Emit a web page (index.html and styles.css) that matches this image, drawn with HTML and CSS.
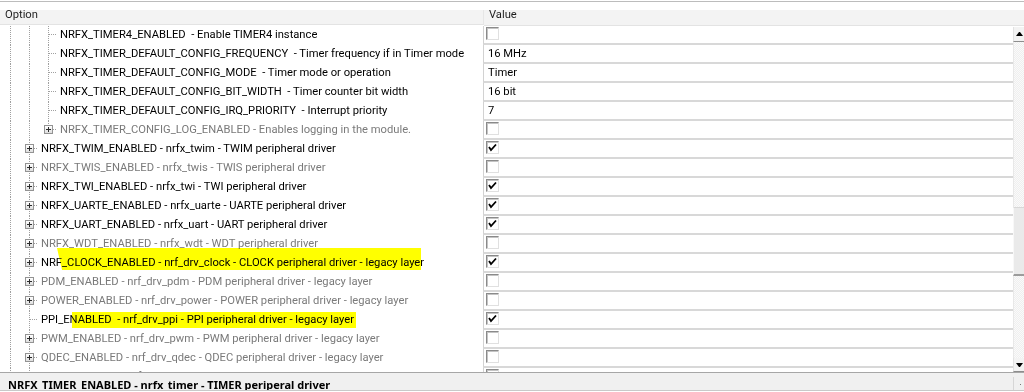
FILE: index.html
```html
<!DOCTYPE html>
<html lang="en">
<head>
    <meta charset="UTF-8">
    <meta name="viewport" content="width=device-width, initial-scale=1.0">
    <title>sdk_config.h - Configuration Wizard</title>
    <link rel="stylesheet" href="styles.css">
</head>
<body>

<div class="wizard">
    <div class="head">
        <div class="head-opt">Option</div>
        <div class="head-val">Value</div>
    </div>

    <div class="list">
        <div class="rows">
            <div class="row">
                <div class="opt"><span class="g v"></span><span class="g v"></span><span class="g tee"></span><span class="txt">NRFX_TIMER4_ENABLED  - Enable TIMER4 instance</span></div>
                <div class="val"><span class="chk"></span></div>
            </div>
            <div class="row">
                <div class="opt"><span class="g v"></span><span class="g v"></span><span class="g tee"></span><span class="txt">NRFX_TIMER_DEFAULT_CONFIG_FREQUENCY  - Timer frequency if in Timer mode</span></div>
                <div class="val"><span class="vtxt">16 MHz</span></div>
            </div>
            <div class="row">
                <div class="opt"><span class="g v"></span><span class="g v"></span><span class="g tee"></span><span class="txt">NRFX_TIMER_DEFAULT_CONFIG_MODE  - Timer mode or operation</span></div>
                <div class="val"><span class="vtxt">Timer</span></div>
            </div>
            <div class="row">
                <div class="opt"><span class="g v"></span><span class="g v"></span><span class="g tee"></span><span class="txt">NRFX_TIMER_DEFAULT_CONFIG_BIT_WIDTH  - Timer counter bit width</span></div>
                <div class="val"><span class="vtxt">16 bit</span></div>
            </div>
            <div class="row">
                <div class="opt"><span class="g v"></span><span class="g v"></span><span class="g tee"></span><span class="txt">NRFX_TIMER_DEFAULT_CONFIG_IRQ_PRIORITY  - Interrupt priority</span></div>
                <div class="val"><span class="vtxt">7</span></div>
            </div>
            <div class="row off">
                <div class="opt"><span class="g v"></span><span class="g v"></span><span class="g end"><span class="exp"></span></span><span class="txt">NRFX_TIMER_CONFIG_LOG_ENABLED - Enables logging in the module.</span></div>
                <div class="val"><span class="chk"></span></div>
            </div>
            <div class="row">
                <div class="opt"><span class="g v"></span><span class="g tee"><span class="exp"></span></span><span class="txt">NRFX_TWIM_ENABLED - nrfx_twim - TWIM peripheral driver</span></div>
                <div class="val"><span class="chk"><svg class="tick" viewBox="0 0 11 11"><path d="M2 5l2 3 5-5.5"/></svg></span></div>
            </div>
            <div class="row off">
                <div class="opt"><span class="g v"></span><span class="g tee"><span class="exp"></span></span><span class="txt">NRFX_TWIS_ENABLED - nrfx_twis - TWIS peripheral driver</span></div>
                <div class="val"><span class="chk"></span></div>
            </div>
            <div class="row">
                <div class="opt"><span class="g v"></span><span class="g tee"><span class="exp"></span></span><span class="txt">NRFX_TWI_ENABLED - nrfx_twi - TWI peripheral driver</span></div>
                <div class="val"><span class="chk"><svg class="tick" viewBox="0 0 11 11"><path d="M2 5l2 3 5-5.5"/></svg></span></div>
            </div>
            <div class="row">
                <div class="opt"><span class="g v"></span><span class="g tee"><span class="exp"></span></span><span class="txt">NRFX_UARTE_ENABLED - nrfx_uarte - UARTE peripheral driver</span></div>
                <div class="val"><span class="chk"><svg class="tick" viewBox="0 0 11 11"><path d="M2 5l2 3 5-5.5"/></svg></span></div>
            </div>
            <div class="row">
                <div class="opt"><span class="g v"></span><span class="g tee"><span class="exp"></span></span><span class="txt">NRFX_UART_ENABLED - nrfx_uart - UART peripheral driver</span></div>
                <div class="val"><span class="chk"><svg class="tick" viewBox="0 0 11 11"><path d="M2 5l2 3 5-5.5"/></svg></span></div>
            </div>
            <div class="row off">
                <div class="opt"><span class="g v"></span><span class="g tee"><span class="exp"></span></span><span class="txt">NRFX_WDT_ENABLED - nrfx_wdt - WDT peripheral driver</span></div>
                <div class="val"><span class="chk"></span></div>
            </div>
            <div class="row">
                <div class="opt"><span class="g v"></span><span class="g tee"><span class="exp"></span></span><span class="txt">NRF_CLOCK_ENABLED - nrf_drv_clock - CLOCK peripheral driver - legacy layer</span><span class="hl hl-clock"></span></div>
                <div class="val"><span class="chk"><svg class="tick" viewBox="0 0 11 11"><path d="M2 5l2 3 5-5.5"/></svg></span></div>
            </div>
            <div class="row off">
                <div class="opt"><span class="g v"></span><span class="g tee"><span class="exp"></span></span><span class="txt">PDM_ENABLED - nrf_drv_pdm - PDM peripheral driver - legacy layer</span></div>
                <div class="val"><span class="chk"></span></div>
            </div>
            <div class="row off">
                <div class="opt"><span class="g v"></span><span class="g tee"><span class="exp"></span></span><span class="txt">POWER_ENABLED - nrf_drv_power - POWER peripheral driver - legacy layer</span></div>
                <div class="val"><span class="chk"></span></div>
            </div>
            <div class="row">
                <div class="opt"><span class="g v"></span><span class="g tee"></span><span class="txt">PPI_ENABLED  - nrf_drv_ppi - PPI peripheral driver - legacy layer</span><span class="hl hl-ppi"></span></div>
                <div class="val"><span class="chk"><svg class="tick" viewBox="0 0 11 11"><path d="M2 5l2 3 5-5.5"/></svg></span></div>
            </div>
            <div class="row off">
                <div class="opt"><span class="g v"></span><span class="g tee"><span class="exp"></span></span><span class="txt">PWM_ENABLED - nrf_drv_pwm - PWM peripheral driver - legacy layer</span></div>
                <div class="val"><span class="chk"></span></div>
            </div>
            <div class="row off">
                <div class="opt"><span class="g v"></span><span class="g tee"><span class="exp"></span></span><span class="txt">QDEC_ENABLED - nrf_drv_qdec - QDEC peripheral driver - legacy layer</span></div>
                <div class="val"><span class="chk"></span></div>
            </div>
            <div class="row off">
                <div class="opt"><span class="g v"></span><span class="g tee"><span class="exp"></span></span><span class="txt">QSPI_ENABLED - nrf_drv_qspi - QSPI peripheral driver - legacy layer</span></div>
                <div class="val"><span class="chk"></span></div>
            </div>
        </div>

        <div class="scrollbar">
            <div class="sb-btn sb-up"></div>
            <div class="sb-track sb-upper"></div>
            <div class="sb-thumb"></div>
            <div class="sb-track sb-lower"></div>
            <div class="sb-btn sb-down"></div>
        </div>
    </div>

    <div class="status">
        <span class="status-text">NRFX_TIMER_ENABLED - nrfx_timer - TIMER periperal driver</span>
        <span class="grip"></span>
    </div>
</div>

</body>
</html>
```

FILE: styles.css
```css
/* Keil-style configuration wizard tree */
body {
    margin: 0;
    height: 392px;
    overflow: hidden;
    font-family: Roboto, "Noto Sans", sans-serif;
    font-size: 11.2px;
    color: #000;
    background-color: #fff;
}
.wizard {
    width: 1024px;
}

/* column header */
.head {
    display: flex;
    margin-top: 1px;
    border-top: 1px solid #bcbcbc;
    padding-top: 8px;
}
.head-opt,
.head-val {
    height: 15px;
    line-height: 10px;
    background-color: #f3f3f3;
    border-bottom: 1px solid #e3e3e3;
    color: #1e1e1e;
}
.head-opt {
    width: 484px;
    box-sizing: border-box;
    padding-left: 5px;
    border-right: 1px solid #e6e6e6;
}
.head-val {
    flex: 1;
    padding-left: 5px;
}

/* rows */
.list {
    display: flex;
    height: 346px;
}
.rows {
    width: 1013px;
    overflow: hidden;
}
.row {
    display: flex;
    height: 19px;
}
.opt {
    width: 483px;
    display: flex;
    position: relative;
}
.txt {
    white-space: pre;
    margin-left: 3px;
    line-height: 18px;
}
.off .txt {
    color: #7a7a7a;
}
.val {
    flex: 1;
    box-sizing: border-box;
    border-left: 1px solid #d2d2d2;
    border-bottom: 2px solid #d8d8d8;
    padding-left: 2px;
    line-height: 18px;
}
.vtxt {
    margin-left: 2px;
}

/* tree guide lines */
.wizard {
    --dotv: repeating-linear-gradient(to bottom, #a0a0a0 0 1px, transparent 1px 2px);
    --doth: repeating-linear-gradient(to right, #a0a0a0 0 1px, transparent 1px 2px);
}
.g {
    flex: none;
    width: 19px;
    height: 19px;
    display: flex;
    align-items: flex-start;
}
.g.v {
    background: var(--dotv) 10px 0 / 1px 100% no-repeat;
}
.g.tee {
    background: var(--dotv) 10px 0 / 1px 100% no-repeat,
                var(--doth) 11px 8px / 8px 1px no-repeat;
}
.g.end {
    background: var(--dotv) 10px 0 / 1px 9px no-repeat,
                var(--doth) 11px 8px / 8px 1px no-repeat;
}
.exp {
    width: 9px;
    height: 9px;
    box-sizing: border-box;
    margin: 4px 0 0 6px;
    border: 1px solid #939393;
    background: linear-gradient(#2b2b2b, #2b2b2b) center / 5px 1px no-repeat,
                linear-gradient(#2b2b2b, #2b2b2b) center / 1px 5px no-repeat,
                linear-gradient(#ffffff, #dedede);
}

/* check boxes */
.chk {
    display: block;
    width: 13px;
    height: 13px;
    box-sizing: border-box;
    margin-top: 1px;
    border: 1px solid;
    border-color: #8a8a8a #e0e0e0 #e0e0e0 #8a8a8a;
    box-shadow: inset 1px 1px 0 #c4c4c4;
    background-color: #fff;
}
.tick {
    display: block;
    width: 11px;
    height: 11px;
}
.tick path {
    fill: none;
    stroke: #000;
    stroke-width: 1.8;
}

/* marker pen highlights drawn over the screenshot */
.hl {
    position: absolute;
    background-color: #ffff00;
    mix-blend-mode: multiply;
}
.hl-clock {
    left: 57px;
    top: -6px;
    width: 364px;
    height: 22px;
    clip-path: polygon(0 0, 100% 0, 100% 100%, 5px 100%);
}
.hl-ppi {
    left: 72px;
    top: 1px;
    width: 284px;
    height: 16px;
}

/* vertical scrollbar (cut off at the right edge) */
.scrollbar {
    width: 11px;
    display: flex;
    flex-direction: column;
    padding-top: 1px;
}
.sb-btn {
    flex: none;
    height: 14px;
    display: flex;
    align-items: center;
    justify-content: flex-end;
    background-color: #f3f3f3;
    border-left: 1px solid #e2e2e2;
    border-bottom: 1px solid #8d8d8d;
}
.sb-down {
    height: 13px;
}
.sb-btn::after {
    content: '';
    width: 1px;
    margin-right: 1px;
    border-left: 3px solid transparent;
    border-right: 3px solid transparent;
}
.sb-up::after {
    border-bottom: 4px solid #000;
}
.sb-down::after {
    border-top: 4px solid #000;
}
.sb-track {
    border-left: 1px solid #e8e8e8;
    background: repeating-conic-gradient(#efefef 0 25%, #fafafa 0 50%) 0 0 / 2px 2px;
}
.sb-upper {
    flex: none;
    height: 165px;
}
.sb-lower {
    flex: 1;
}
.sb-thumb {
    flex: none;
    height: 66px;
    background-color: #eaeaea;
    border-top: 1px solid #d8d8d8;
    border-bottom: 2px solid #9c9c9c;
    border-left: 1px solid #f8f8f8;
}

/* status line */
.status {
    display: flex;
    height: 17px;
    overflow: hidden;
    background-color: #f0f0f0;
    border-top: 1px solid #a6a6a6;
    border-bottom: 1px solid #c9c9c9;
}
.status-text {
    flex: 1;
    padding-left: 8px;
    font-family: "Noto Sans", sans-serif;
    font-size: 11px;
    font-weight: bold;
    line-height: 24px;
    white-space: nowrap;
}
.grip {
    width: 10px;
    margin-top: 4px;
    border-left: 1px solid #d6d6d6;
    background: linear-gradient(#777, #777) 6px 7px / 1px 1px no-repeat;
}
```
